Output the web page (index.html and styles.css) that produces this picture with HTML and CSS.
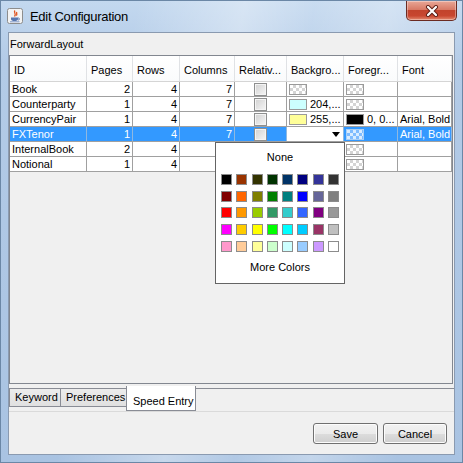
FILE: index.html
```html
<!DOCTYPE html>
<html lang="en">
<head>
    <meta charset="UTF-8">
    <meta name="viewport" content="width=device-width, initial-scale=1.0">
    <title>Edit Configuration</title>
    <link rel="stylesheet" href="styles.css">
</head>
<body>
<div class="window">
    <div class="titlebar">
        <svg class="app-icon" width="16" height="16" viewBox="0 0 16 16">
            <rect x="0.5" y="0.5" width="15" height="15" rx="2" fill="#f3f3f3" stroke="#8d8d8d"/>
            <path d="M8 2.5 C6 4.5 10 5.5 7.5 8.5 M9.8 4 C9 5.2 10.6 6 9.4 7.6" stroke="#e0531f" stroke-width="1.3" fill="none"/>
            <path d="M4 9.5 H11 V11 C11 12.6 9.5 13 7.5 13 S4 12.6 4 11 Z" fill="#5877b0"/>
            <path d="M11 10 C13 10 13 12 11 12" stroke="#5877b0" fill="none"/>
            <path d="M3 13.8 H12.5" stroke="#7d98c8"/>
        </svg>
        <span class="title">Edit Configuration</span>
        <div class="close-btn">
            <svg width="14" height="12" viewBox="0 0 14 12">
                <path d="M3 2 L11 10 M11 2 L3 10" stroke="#5a1d14" stroke-width="4" stroke-linecap="round"/>
                <path d="M3 2 L11 10 M11 2 L3 10" stroke="#ffffff" stroke-width="2.2" stroke-linecap="round"/>
            </svg>
        </div>
    </div>

    <div class="client">
        <div class="tab-content">
            <div class="layout-name">ForwardLayout</div>
            <div class="scroll-pane">
                <div class="grid-table">
                    <div class="row header">
                        <div class="cell">ID</div>
                        <div class="cell">Pages</div>
                        <div class="cell">Rows</div>
                        <div class="cell">Columns</div>
                        <div class="cell">Relativ...</div>
                        <div class="cell">Backgro...</div>
                        <div class="cell">Foregr...</div>
                        <div class="cell">Font</div>
                    </div>
                    <div class="row">
                        <div class="cell">Book</div>
                        <div class="cell num">2</div>
                        <div class="cell num">4</div>
                        <div class="cell num">7</div>
                        <div class="cell check"><span class="checkbox"></span></div>
                        <div class="cell color"><span class="swatch empty"></span></div>
                        <div class="cell color"><span class="swatch empty"></span></div>
                        <div class="cell"></div>
                    </div>
                    <div class="row">
                        <div class="cell">Counterparty</div>
                        <div class="cell num">1</div>
                        <div class="cell num">4</div>
                        <div class="cell num">7</div>
                        <div class="cell check"><span class="checkbox"></span></div>
                        <div class="cell color"><span class="swatch" style="background: #ccffff;"></span>204,...</div>
                        <div class="cell color"><span class="swatch empty"></span></div>
                        <div class="cell"></div>
                    </div>
                    <div class="row">
                        <div class="cell">CurrencyPair</div>
                        <div class="cell num">1</div>
                        <div class="cell num">4</div>
                        <div class="cell num">7</div>
                        <div class="cell check"><span class="checkbox"></span></div>
                        <div class="cell color"><span class="swatch" style="background: #ffff99;"></span>255,...</div>
                        <div class="cell color"><span class="swatch" style="background: #000000;"></span>0, 0...</div>
                        <div class="cell">Arial, Bold</div>
                    </div>
                    <div class="row selected">
                        <div class="cell">FXTenor</div>
                        <div class="cell num">1</div>
                        <div class="cell num">4</div>
                        <div class="cell num">7</div>
                        <div class="cell check"><span class="checkbox"></span></div>
                        <div class="cell editor">
                            <svg width="8" height="5" viewBox="0 0 8 5"><path d="M0 0 H8 L4 5 Z" fill="#000"/></svg>
                        </div>
                        <div class="cell color"><span class="swatch empty"></span></div>
                        <div class="cell">Arial, Bold</div>
                    </div>
                    <div class="row">
                        <div class="cell">InternalBook</div>
                        <div class="cell num">2</div>
                        <div class="cell num">4</div>
                        <div class="cell num">7</div>
                        <div class="cell check"><span class="checkbox"></span></div>
                        <div class="cell color"><span class="swatch empty"></span></div>
                        <div class="cell color"><span class="swatch empty"></span></div>
                        <div class="cell"></div>
                    </div>
                    <div class="row">
                        <div class="cell">Notional</div>
                        <div class="cell num">1</div>
                        <div class="cell num">4</div>
                        <div class="cell num">7</div>
                        <div class="cell check"><span class="checkbox"></span></div>
                        <div class="cell color"><span class="swatch empty"></span></div>
                        <div class="cell color"><span class="swatch empty"></span></div>
                        <div class="cell"></div>
                    </div>
                </div>

                <!-- colour chooser popup of the Background editor -->
                <div class="color-popup">
                    <div class="popup-item">None</div>
                    <div class="palette">
                        <span style="background: #000000;"></span>
                        <span style="background: #993300;"></span>
                        <span style="background: #333300;"></span>
                        <span style="background: #003300;"></span>
                        <span style="background: #003366;"></span>
                        <span style="background: #000080;"></span>
                        <span style="background: #333399;"></span>
                        <span style="background: #333333;"></span>
                        <span style="background: #800000;"></span>
                        <span style="background: #ff6600;"></span>
                        <span style="background: #808000;"></span>
                        <span style="background: #008000;"></span>
                        <span style="background: #008080;"></span>
                        <span style="background: #0000ff;"></span>
                        <span style="background: #666699;"></span>
                        <span style="background: #808080;"></span>
                        <span style="background: #ff0000;"></span>
                        <span style="background: #ff9900;"></span>
                        <span style="background: #99cc00;"></span>
                        <span style="background: #339966;"></span>
                        <span style="background: #33cccc;"></span>
                        <span style="background: #3366ff;"></span>
                        <span style="background: #800080;"></span>
                        <span style="background: #999999;"></span>
                        <span style="background: #ff00ff;"></span>
                        <span style="background: #ffcc00;"></span>
                        <span style="background: #ffff00;"></span>
                        <span style="background: #00ff00;"></span>
                        <span style="background: #00ffff;"></span>
                        <span style="background: #00ccff;"></span>
                        <span style="background: #993366;"></span>
                        <span style="background: #c0c0c0;"></span>
                        <span style="background: #ff99cc;"></span>
                        <span style="background: #ffcc99;"></span>
                        <span style="background: #ffff99;"></span>
                        <span style="background: #ccffcc;"></span>
                        <span style="background: #ccffff;"></span>
                        <span style="background: #99ccff;"></span>
                        <span style="background: #cc99ff;"></span>
                        <span style="background: #ffffff;"></span>
                    </div>
                    <div class="popup-item more">More Colors</div>
                </div>
            </div>
        </div>

        <div class="tabs">
            <div class="tab">Keyword</div>
            <div class="tab">Preferences</div>
            <div class="tab active">Speed Entry</div>
        </div>

        <div class="buttons">
            <button class="btn save">Save</button>
            <button class="btn cancel">Cancel</button>
        </div>
    </div>
</div>
</body>
</html>
```

FILE: styles.css
```css
* {
    box-sizing: border-box;
}
body {
    margin: 0;
    width: 463px;
    height: 463px;
    overflow: hidden;
    font-family: "Liberation Sans", Arial, sans-serif;
    font-size: 11px;
    color: #000;
}
.window {
    width: 463px;
    height: 463px;
    border: 1px solid #6b87a6;
    background:
        linear-gradient(100deg, rgba(255,255,255,0) 25%, rgba(255,255,255,0.35) 45%, rgba(255,255,255,0.1) 58%, rgba(255,255,255,0.3) 72%, rgba(255,255,255,0) 88%),
        linear-gradient(#c3d8ef, #b3cbe7 60px, #a9c3e2);
}

/* title bar */
.titlebar {
    display: flex;
    align-items: flex-start;
    height: 31px;
    padding: 0 5px 0 6px;
}
.app-icon {
    margin-top: 7px;
}
.title {
    margin: 8px 0 0 7px;
    font-size: 13px;
    line-height: 16px;
    letter-spacing: -0.3px;
    color: #000;
}
.close-btn {
    margin-left: auto;
    width: 51px;
    height: 20px;
    display: flex;
    align-items: center;
    justify-content: center;
    border: 1px solid #6b2b22;
    border-top: none;
    border-radius: 0 0 5px 5px;
    background: linear-gradient(#e8a797 0%, #d87a66 45%, #c2432c 50%, #c8462f 78%, #e38a70 100%);
    box-shadow: inset 0 0 0 1px rgba(255, 255, 255, 0.35);
}

/* client area */
.client {
    margin: 0 7px;
    height: 423px;
    border: 1px solid #8a9ab0;
    background: #f0f0f0;
}
.tab-content {
    padding-bottom: 4px;
    border-bottom: 1px solid #898c95;
}
.layout-name {
    height: 22px;
    line-height: 22px;
    padding-left: 1px;
}
.scroll-pane {
    position: relative;
    height: 329px;
    margin-right: 1px;
    border: 1px solid #828790;
    background: #f0f0f0;
}

/* table */
.row {
    display: grid;
    grid-template-columns: 77px 46px 47px 55px 52px 57px 54px 54px;
    height: 15px;
    line-height: 14px;
    border-bottom: 1px solid #a0a0a0;
    background: #fff;
}
.row.header {
    height: 26px;
    line-height: 22px;
    background: linear-gradient(#ffffff, #fafbfc);
    border-bottom: 1px solid #d5d5d5;
}
.cell {
    padding: 0 2px;
    border-right: 1px solid #a0a0a0;
    white-space: nowrap;
    overflow: hidden;
}
.header .cell {
    padding: 3px 0 0 4px;
    border-right-color: #e0e2e5;
}
.num {
    text-align: right;
}
.check {
    display: flex;
    justify-content: center;
    align-items: center;
    padding-right: 3px;
}
.checkbox {
    width: 13px;
    height: 13px;
    border: 1px solid #8e8f8f;
    background: linear-gradient(135deg, #d1d1d1, #f6f6f6);
    box-shadow: inset 0 0 0 1px #f4f4f4;
}
.color {
    display: flex;
    align-items: center;
    gap: 3px;
}
.swatch {
    flex: none;
    width: 18px;
    height: 11px;
    border: 1px solid #9a9a9a;
}
.swatch.empty {
    background: repeating-conic-gradient(#d4d4d4 0 25%, #ffffff 0 50%) 0 0 / 6px 6px;
}
.selected {
    background: #3399ff;
    color: #fff;
}
.selected .cell {
    border-right-color: #8fb8e0;
}
.selected .swatch.empty {
    border-color: #a7cff7;
    background: repeating-conic-gradient(#7fbcff 0 25%, #d9ecff 0 50%) 0 0 / 6px 6px;
}
.editor {
    display: flex;
    justify-content: flex-end;
    align-items: center;
    padding-right: 3px;
    background: #fff;
}

/* colour popup */
.color-popup {
    position: absolute;
    left: 205px;
    top: 86px;
    width: 130px;
    height: 142px;
    border: 1px solid #646464;
    background: #fff;
}
.popup-item {
    height: 28px;
    line-height: 28px;
    text-align: center;
}
.popup-item.more {
    height: 30px;
    line-height: 30px;
}
.palette {
    display: grid;
    grid-template-columns: repeat(8, 11px);
    column-gap: 4.3px;
    row-gap: 5.7px;
    margin-top: 3px;
    padding-left: 5px;
}
.palette span {
    width: 11px;
    height: 11px;
    border: 1px solid #8c8c8c;
}

/* tabs at the bottom */
.tabs {
    display: flex;
    align-items: flex-start;
    height: 22px;
}
.tab {
    height: 18px;
    line-height: 17px;
    padding: 0 5px;
    border-right: 1px solid #898c95;
    border-bottom: 1px solid #898c95;
    background: linear-gradient(#ececec, #e0e0e0);
}
.tab:first-child {
    border-left: 1px solid #898c95;
    width: 52px;
}
.tab:nth-child(2) {
    width: 66px;
}
.tab.active {
    width: 70px;
    height: 25px;
    margin: -3px 0 0 -1px;
    padding: 6px 0 0 6px;
    line-height: 18px;
    border-left: 1px solid #898c95;
    background: #fff;
}

/* button bar */
.buttons {
    display: flex;
    justify-content: flex-end;
    gap: 5px;
    height: 42px;
    padding: 11px 7px 0 0;
    border-top: 1px solid #dadada;
}
.btn {
    height: 21px;
    padding: 0;
    font-family: "Liberation Sans", Arial, sans-serif;
    font-size: 11px;
    color: #000;
    border: 1px solid #707070;
    border-radius: 3px;
    background: linear-gradient(#f2f2f2 0%, #ebebeb 50%, #dddddd 51%, #cfcfcf 100%);
    box-shadow: inset 0 0 0 1px #fcfcfc;
}
.save {
    width: 65px;
}
.cancel {
    width: 64px;
}
```
